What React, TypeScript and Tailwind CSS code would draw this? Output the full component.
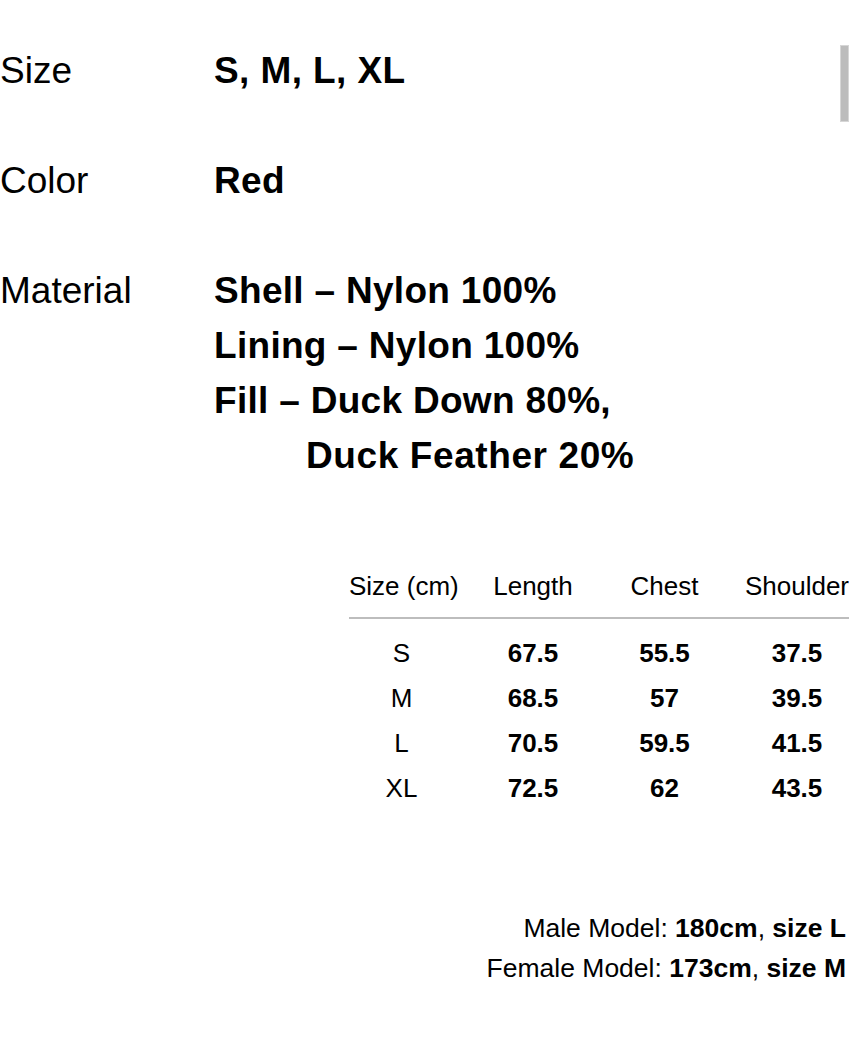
const specs = [
  { label: 'Size', lines: ['S, M, L, XL'] },
  { label: 'Color', lines: ['Red'] },
];

const materials = ['Shell – Nylon 100%', 'Lining – Nylon 100%', 'Fill – Duck Down 80%,'];

const sizeRows = [
  { size: 'S', length: '67.5', chest: '55.5', shoulder: '37.5' },
  { size: 'M', length: '68.5', chest: '57', shoulder: '39.5' },
  { size: 'L', length: '70.5', chest: '59.5', shoulder: '41.5' },
  { size: 'XL', length: '72.5', chest: '62', shoulder: '43.5' },
];

const cols = 'grid grid-cols-[105px_158px_105px_160px]';

export default function App() {
  return (
    <div className="relative min-h-[1038px] w-full overflow-hidden bg-white text-black font-['Liberation_Sans',Arial,sans-serif]">
      <div className="absolute right-0 top-[45px] h-[77px] w-[9px] border border-[#d6d6d6] bg-[#bcbcbc]" />

      <div className="flex flex-col gap-[55px] pt-[43px] text-[37px] leading-[55px]">
        {specs.map((spec) => (
          <div key={spec.label} className="flex">
            <div className="w-[214px] shrink-0">{spec.label}</div>
            <div className="font-bold tracking-[0.4px]">{spec.lines[0]}</div>
          </div>
        ))}
        <div className="flex">
          <div className="w-[214px] shrink-0">Material</div>
          <div className="font-bold tracking-[0.3px]">
            {materials.map((line) => (
              <div key={line}>{line}</div>
            ))}
            <div className="pl-[92px] tracking-[0.6px]">Duck Feather 20%</div>
          </div>
        </div>
      </div>

      <div className="ml-[349px] mt-[85px] w-[528px] text-[26px]">
        <div className={`${cols} border-b-2 border-[#bdbdbd] pb-[13px] leading-[36px]`}>
          <div className="text-center whitespace-nowrap">Size (cm)</div>
          <div className="text-center">Length</div>
          <div className="text-center">Chest</div>
          <div className="text-center">Shoulder</div>
        </div>
        <div className="pt-[12px]">
          {sizeRows.map((row) => (
            <div key={row.size} className={`${cols} leading-[45px]`}>
              <div className="text-center">{row.size}</div>
              <div className="text-center font-bold">{row.length}</div>
              <div className="text-center font-bold">{row.chest}</div>
              <div className="text-center font-bold">{row.shoulder}</div>
            </div>
          ))}
        </div>
      </div>

      <div className="mt-[97px] pr-[3px] text-right text-[26.5px] leading-[40px]">
        <div>
          Male Model: <span className="font-bold">180cm</span>, <span className="font-bold">size L</span>
        </div>
        <div>
          Female Model: <span className="font-bold">173cm</span>, <span className="font-bold">size M</span>
        </div>
      </div>
    </div>
  );
}
